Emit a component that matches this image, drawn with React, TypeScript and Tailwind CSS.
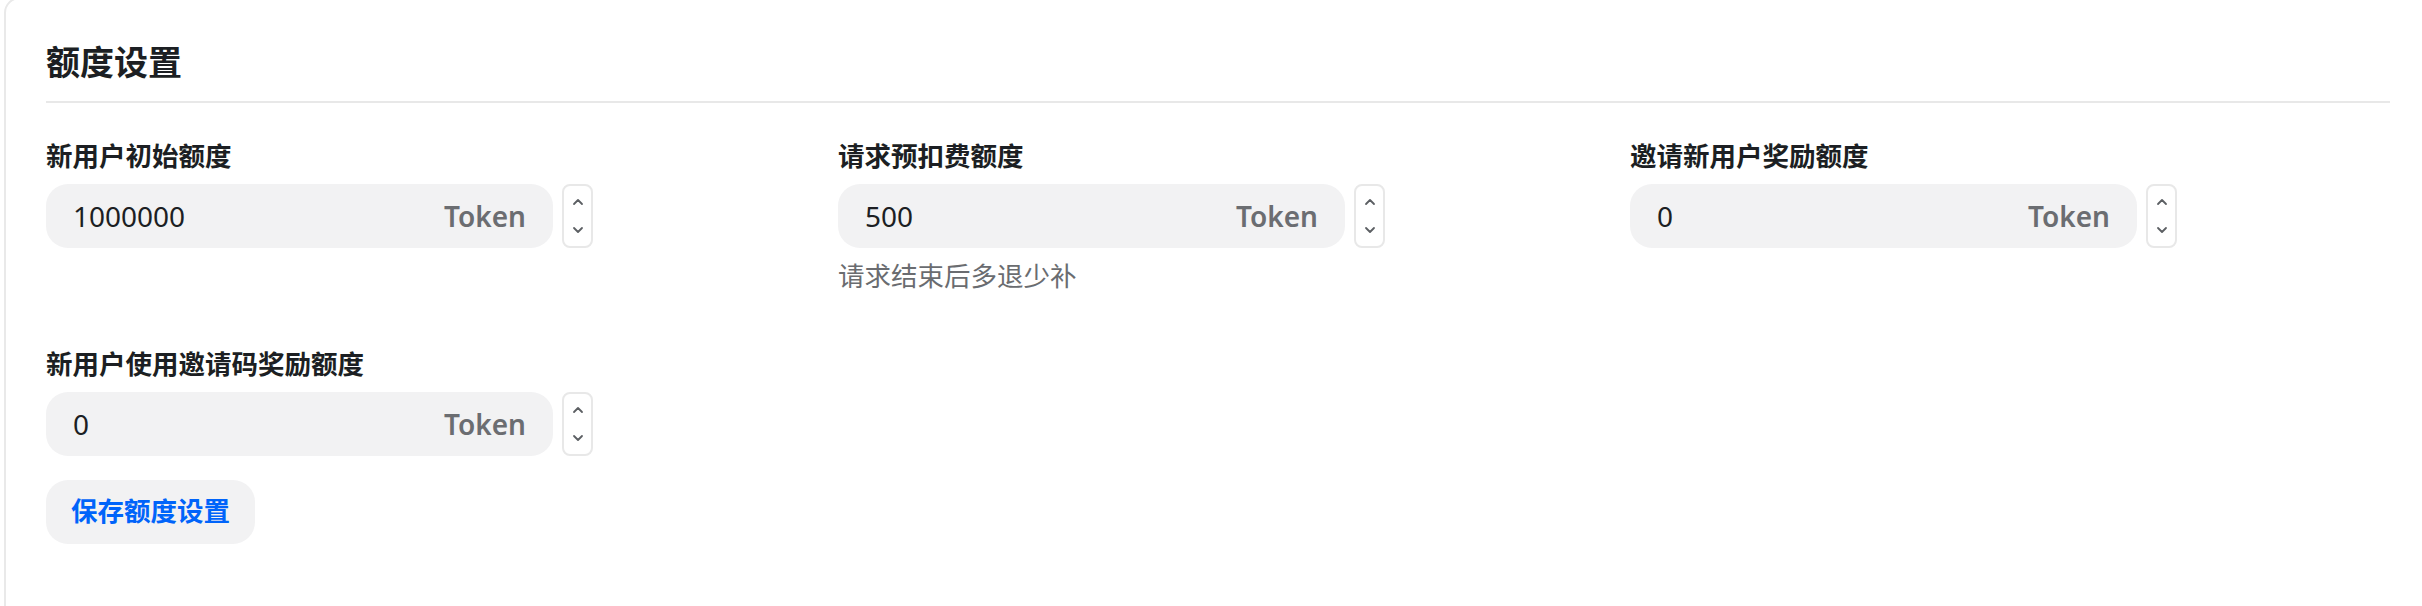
import React from "react";

const FONT = { fontFamily: '"Noto Sans", "Noto Sans CJK SC", sans-serif' };

function Stepper() {
  return (
    <div className="w-[31px] h-[64px] border-2 border-[#e8e8e8] rounded-[8px] flex flex-col items-center justify-between py-[12px] box-border">
      <svg width="12" height="8" viewBox="0 0 12 8" fill="none">
        <path d="M2 6 L6 2 L10 6" stroke="#5c5f63" strokeWidth="1.8" strokeLinecap="round" strokeLinejoin="round" />
      </svg>
      <svg width="12" height="8" viewBox="0 0 12 8" fill="none">
        <path d="M2 2 L6 6 L10 2" stroke="#5c5f63" strokeWidth="1.8" strokeLinecap="round" strokeLinejoin="round" />
      </svg>
    </div>
  );
}

function Field({ label, value, helper }: { label: string; value: string; helper?: string }) {
  return (
    <div className="flex flex-col">
      <div className="text-[26.5px] leading-[36px] font-semibold text-[#1c1f23]">{label}</div>
      <div className="mt-[10px] flex items-center gap-[9px]">
        <div className="w-[507px] h-[64px] rounded-[22px] bg-[#f2f2f3] flex items-center justify-between px-[27px]">
          <span className="text-[28px] text-[#1c1f23]">{value}</span>
          <span className="text-[28px] font-semibold text-[#6b6d71]">Token</span>
        </div>
        <Stepper />
      </div>
      {helper && (
        <div className="mt-[10px] text-[26.5px] leading-[36px] text-[#6a6c70]">{helper}</div>
      )}
    </div>
  );
}

export default function App() {
  return (
    <div className="w-[2422px] h-[606px] overflow-hidden bg-white" style={FONT}>
      <div className="ml-[4px] -mt-[3px] w-[2432px] h-[700px] border-2 border-[#e9e9e9] rounded-[16px] pl-[40px] pr-[40px] box-border">
        <div className="pt-[40px] pb-[16px] border-b-2 border-[#e8e8e8] w-[2344px]">
          <div className="text-[34px] leading-[46px] font-semibold text-[#1c1f23]">额度设置</div>
        </div>
        <div className="mt-[35px] grid grid-cols-[repeat(3,762px)] gap-x-[30px] gap-y-[52px]">
          <Field label="新用户初始额度" value="1000000" />
          <Field label="请求预扣费额度" value="500" helper="请求结束后多退少补" />
          <Field label="邀请新用户奖励额度" value="0" />
          <Field label="新用户使用邀请码奖励额度" value="0" />
        </div>
        <button className="mt-[24px] w-[209px] h-[64px] rounded-[22px] bg-[#f2f2f3] text-[26.5px] font-semibold text-[#0064fa] flex items-center justify-center">
          保存额度设置
        </button>
      </div>
    </div>
  );
}
